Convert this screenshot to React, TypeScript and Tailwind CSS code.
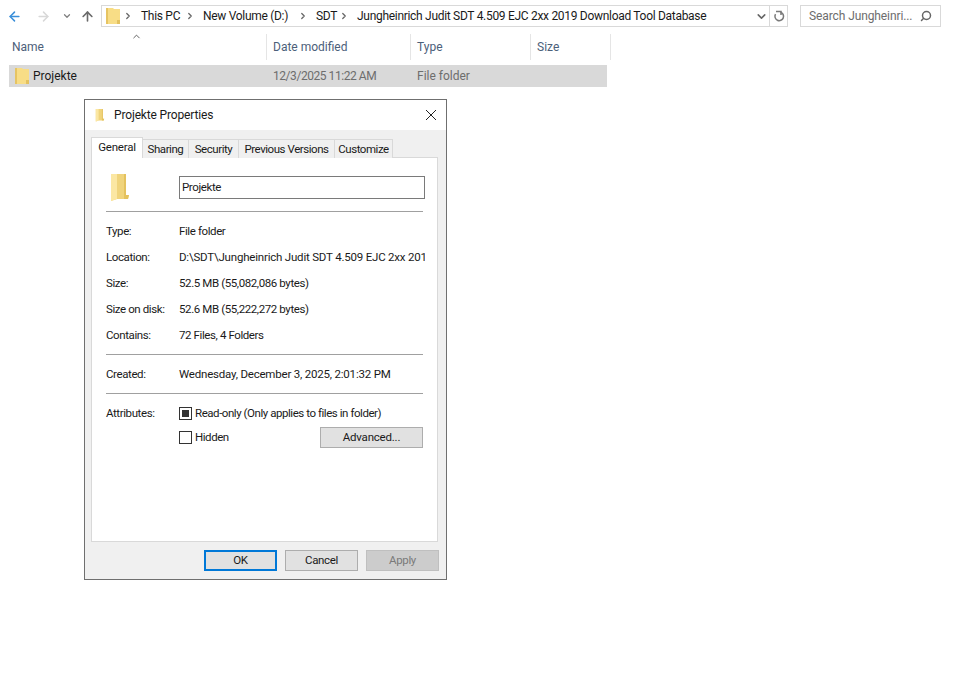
import { ArrowLeft, ArrowRight, ArrowUp, ChevronDown, ChevronRight, ChevronUp, Search } from "lucide-react";

const font = { fontFamily: '"Roboto", "Liberation Sans", sans-serif' };

const FolderIcon = () => (
  <svg width="14" height="18" viewBox="0 0 14 18" className="shrink-0">
    <path d="M0 1h7l1 1h6v15H0z" fill="#f8dd86" />
    <path d="M0 1h2v16H0z" fill="#e6c463" />
    <path d="M11 13h3v4h-3z" fill="#e3c15f" />
  </svg>
);

const OpenFolderIcon = ({ small }: { small?: boolean }) => (
  <svg width={small ? 10 : 20} height={small ? 14 : 30} viewBox="0 0 20 30" className="shrink-0">
    <path d="M1 2h15v21h3l-1 4H7l-6 2z" fill="#f0d47c" />
    <path d="M1 2h6v25l-6 2z" fill="#fbe7a3" />
    <path d="M16 2v21h3l-1 4h-4V2z" fill="#e4c25f" />
  </svg>
);

const Crumb = ({ text, w }: { text: string; w: string }) => (
  <div className={`flex items-center ${w}`}>
    <ChevronRight size={10} strokeWidth={3} className="text-[#666] mr-[8px] shrink-0" />
    <span className="whitespace-nowrap">{text}</span>
  </div>
);

const HeaderCell = ({ text, w }: { text: string; w: string }) => (
  <div className={`${w} h-[26px] flex items-center pl-[6px] border-r border-[#e5e5e5] text-[#4c607a]`}>{text}</div>
);

const Row = ({ label, value, clip, tight }: { label: string; value: string; clip?: boolean; tight?: boolean }) => (
  <div className="flex items-center h-[26px] pt-px">
    <div className="w-[73px] shrink-0 tracking-[-0.4px]">{label}</div>
    <div className={clip ? "w-[246px] overflow-hidden whitespace-nowrap" : tight ? "whitespace-nowrap tracking-[-0.4px]" : "whitespace-nowrap"}>
      {value}
    </div>
  </div>
);

const Sep = ({ className }: { className: string }) => (
  <div className={`h-px bg-[#a0a0a0] w-[317px] ${className}`} />
);

const Tab = ({ text, w }: { text: string; w: string }) => (
  <div className={`${w} h-[19px] pt-px bg-[#f0f0f0] border border-l-0 border-b-0 border-[#d9d9d9] flex items-center justify-center whitespace-nowrap tracking-[-0.45px]`}>
    {text}
  </div>
);

const DlgButton = ({ text, className }: { text: string; className: string }) => (
  <div className={`w-[73px] h-[21px] flex items-center justify-center tracking-[-0.35px] ${className}`}>{text}</div>
);

export default function App() {
  return (
    <div className="relative w-[953px] h-[680px] bg-white overflow-hidden text-[12px] text-[#1a1a1a]" style={font}>
      {/* explorer nav */}
      <div className="flex items-center h-[22px] mt-[5px]">
        <ArrowLeft size={15} strokeWidth={2.4} className="ml-[7px] text-[#3b8fd9]" />
        <ArrowRight size={15} strokeWidth={2.4} className="ml-[14px] text-[#d8d8d8]" />
        <ChevronDown size={10} strokeWidth={3} className="ml-[11px] text-[#808080]" />
        <ArrowUp size={15} strokeWidth={2.6} className="ml-[8px] text-[#6a6a6a]" />
        <div className="ml-[6px] w-[687px] h-[22px] border border-[#d9d9d9] flex items-center">
          <div className="ml-[4px] w-[18px]"><FolderIcon /></div>
          <div className="-ml-[1px] flex items-center tracking-[-0.3px]">
            <Crumb text="This PC" w="w-[62px]" />
            <Crumb text="New Volume (D:)" w="w-[113px]" />
            <Crumb text="SDT" w="w-[41px]" />
            <Crumb text="Jungheinrich Judit SDT 4.509 EJC 2xx 2019 Download Tool Database" w="w-[380px]" />
          </div>
          <ChevronDown size={13} strokeWidth={2.8} className="ml-[36px] text-[#666]" />
          <div className="ml-auto h-full w-[18px] border-l border-[#d9d9d9] flex items-center justify-center">
            <svg width="12" height="13" viewBox="0 0 12 13" fill="none" stroke="#7a7a7a" strokeWidth="1.5">
              <path d="M3 1.5h5v3.5" />
              <path d="M7.5 2.2a4.3 4.3 0 1 1-5 2" />
            </svg>
          </div>
        </div>
        <div className="ml-[12px] w-[141px] h-[22px] border border-[#d9d9d9] flex items-center justify-between pl-[8px] pr-[8px] tracking-[-0.1px] text-[#6d6d6d]">
          <span>Search Jungheinri...</span>
          <Search size={12} strokeWidth={3} className="-scale-x-100 text-[#666]" />
        </div>
      </div>

      {/* column header */}
      <div className="relative flex mt-[7px] ml-[6px]">
        <ChevronUp size={11} strokeWidth={1.8} className="absolute left-[125px] -top-[3px] text-[#444]" />
        <HeaderCell text="Name" w="w-[261px]" />
        <HeaderCell text="Date modified" w="w-[144px]" />
        <HeaderCell text="Type" w="w-[120px]" />
        <HeaderCell text="Size" w="w-[80px]" />
      </div>

      {/* file row */}
      <div className="flex items-center mt-[5px] ml-[9px] w-[598px] h-[22px] bg-[#d9d9d9]">
        <div className="ml-[6px] w-[18px]"><FolderIcon /></div>
        <div className="w-[240px]">Projekte</div>
        <div className="w-[144px] text-[#6d6d6d] tracking-[-0.45px]">12/3/2025 11:22 AM</div>
        <div className="text-[#6d6d6d]">File folder</div>
      </div>

      {/* properties dialog */}
      <div className="absolute left-[84px] top-[99px] w-[363px] h-[481px] border border-[#6f6f6f] bg-[#f0f0f0] flex flex-col text-[11.5px] tracking-[-0.2px]">
        <div className="h-[30px] bg-white flex items-center shrink-0">
          <div className="ml-[10px] w-[19px]"><OpenFolderIcon small /></div>
          <span className="text-[12px] tracking-[-0.15px]">Projekte Properties</span>
          <svg width="12" height="12" viewBox="0 0 12 12" className="ml-auto mr-[9px]">
            <path d="M1 1l10 10M11 1L1 11" stroke="#222" strokeWidth="1" />
          </svg>
        </div>

        <div className="flex ml-[6px] mt-[7px] items-end h-[21px] shrink-0 relative z-10">
          <div className="w-[52px] h-[21px] bg-white border border-b-0 border-[#d9d9d9] flex items-center justify-center">General</div>
          <Tab text="Sharing" w="w-[46px]" />
          <Tab text="Security" w="w-[50px]" />
          <Tab text="Previous Versions" w="w-[96px]" />
          <Tab text="Customize" w="w-[58px]" />
        </div>

        <div className="ml-[6px] w-[347px] h-[385px] -mt-px bg-white border border-[#d9d9d9] pl-[14px] shrink-0">
          <div className="flex items-center mt-[14px] h-[30px]">
            <div className="ml-[4px] w-[69px]"><OpenFolderIcon /></div>
            <div className="w-[246px] h-[23px] pt-px border border-[#7a7a7a] flex items-center pl-[2px] tracking-[-0.4px]">Projekte</div>
          </div>
          <Sep className="mt-[9px]" />
          <div className="mt-[6px]">
            <Row label="Type:" value="File folder" tight />
            <Row label="Location:" value="D:\SDT\Jungheinrich Judit SDT 4.509 EJC 2xx 2019 Download Tool Database" clip />
            <Row label="Size:" value="52.5 MB (55,082,086 bytes)" tight />
            <Row label="Size on disk:" value="52.6 MB (55,222,272 bytes)" tight />
            <Row label="Contains:" value="72 Files, 4 Folders" tight />
          </div>
          <Sep className="mt-[6px]" />
          <div className="mt-[6px]">
            <Row label="Created:" value="Wednesday, December 3, 2025, 2:01:32 PM" />
          </div>
          <Sep className="mt-[6px]" />
          <div className="flex items-center mt-[12px] h-[15px]">
            <div className="w-[73px] tracking-[-0.4px]">Attributes:</div>
            <div className="w-[13px] h-[13px] border border-[#333] flex items-center justify-center">
              <div className="w-[7px] h-[7px] bg-[#333]" />
            </div>
            <span className="ml-[3px] tracking-[-0.45px]">Read-only (Only applies to files in folder)</span>
          </div>
          <div className="flex items-center mt-[6px] h-[21px] w-[317px]">
            <div className="ml-[73px] w-[13px] h-[13px] border border-[#333]" />
            <span className="ml-[3px] tracking-[-0.45px]">Hidden</span>
            <div className="ml-auto w-[103px] h-[21px] bg-[#e1e1e1] border border-[#adadad] flex items-center justify-center">Advanced...</div>
          </div>
        </div>

        <div className="flex justify-end gap-[8px] mt-[8px] mr-[7px]">
          <DlgButton text="OK" className="bg-[#e1e1e1] border-2 border-[#0078d7]" />
          <DlgButton text="Cancel" className="bg-[#e1e1e1] border border-[#adadad]" />
          <DlgButton text="Apply" className="bg-[#cccccc] text-[#7a7a7a] border border-[#bfbfbf]" />
        </div>
      </div>
    </div>
  );
}
